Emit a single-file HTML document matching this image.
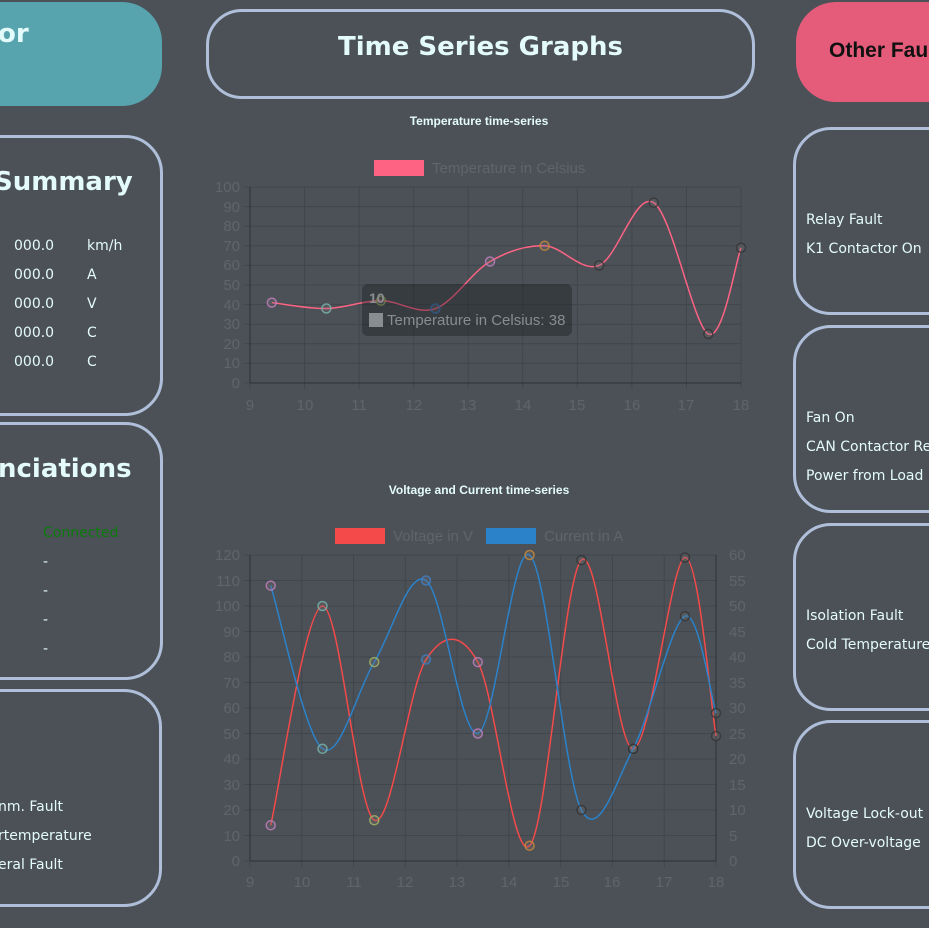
<!DOCTYPE html>
<html><head><meta charset="utf-8">
<style>
body{margin:0;width:929px;height:928px;background:#4b5157;overflow:hidden;position:relative;font-family:"DejaVu Sans",sans-serif;color:#e4fbfb}
.a{position:absolute}
.box{position:absolute;border:3px solid #b0bfd9;border-radius:38px;box-sizing:border-box}
.t{position:absolute;font-size:14px;white-space:nowrap}
.h{position:absolute;font-size:26px;font-weight:bold;white-space:nowrap}
svg{position:absolute;left:0;top:0}
svg text{font-family:"Liberation Sans",sans-serif;font-size:15px;fill:#5f656b}
</style></head><body>
<div class="a" style="left:-60px;top:2px;width:222px;height:104px;background:#57a3ae;border-radius:40px"></div>
<div class="h" style="left:-2px;top:19px">or</div>
<div class="box" style="left:-60px;top:135px;width:223px;height:281px"></div>
<div class="h" style="left:-6px;top:167px">Summary</div>
<div class="t" style="left:14px;top:238px">000.0</div><div class="t" style="left:87px;top:238px">km/h</div>
<div class="t" style="left:14px;top:267px">000.0</div><div class="t" style="left:87px;top:267px">A</div>
<div class="t" style="left:14px;top:296px">000.0</div><div class="t" style="left:87px;top:296px">V</div>
<div class="t" style="left:14px;top:325px">000.0</div><div class="t" style="left:87px;top:325px">C</div>
<div class="t" style="left:14px;top:354px">000.0</div><div class="t" style="left:87px;top:354px">C</div>
<div class="box" style="left:-60px;top:422px;width:223px;height:258px"></div>
<div class="h" style="left:-2px;top:454px">nciations</div>
<div class="t" style="left:43px;top:525px;color:#0a7a0a">Connected</div>
<div class="t" style="left:43px;top:554px">-</div>
<div class="t" style="left:43px;top:583px">-</div>
<div class="t" style="left:43px;top:612px">-</div>
<div class="t" style="left:43px;top:641px">-</div>
<div class="box" style="left:-60px;top:689px;width:222px;height:218px"></div>
<div class="t" style="left:-2px;top:799px">nm. Fault</div>
<div class="t" style="left:-2px;top:828px">rtemperature</div>
<div class="t" style="left:-2px;top:857px">eral Fault</div>

<div class="box" style="left:206px;top:9px;width:549px;height:90px;border-radius:36px"></div>
<div class="h" style="left:206px;width:549px;text-align:center;top:32px">Time Series Graphs</div>

<div class="a" style="left:796px;top:2px;width:200px;height:100px;background:#e55c7a;border-radius:40px"></div>
<div class="a" style="left:829px;top:39px;font:bold 21px 'Liberation Sans',sans-serif;color:#111;white-space:nowrap">Other Faults</div>
<div class="box" style="left:793px;top:127px;width:200px;height:188px"></div>
<div class="t" style="left:806px;top:212px">Relay Fault</div>
<div class="t" style="left:806px;top:241px">K1 Contactor On</div>
<div class="box" style="left:793px;top:325px;width:200px;height:188px"></div>
<div class="t" style="left:806px;top:410px">Fan On</div>
<div class="t" style="left:806px;top:439px">CAN Contactor Request</div>
<div class="t" style="left:806px;top:468px">Power from Load</div>
<div class="box" style="left:793px;top:523px;width:200px;height:188px"></div>
<div class="t" style="left:806px;top:608px">Isolation Fault</div>
<div class="t" style="left:806px;top:637px">Cold Temperature</div>
<div class="box" style="left:793px;top:720px;width:200px;height:189px"></div>
<div class="t" style="left:806px;top:806px">Voltage Lock-out</div>
<div class="t" style="left:806px;top:835px">DC Over-voltage</div>

<svg width="929" height="928" id="s">
<g id="grid" stroke="#41464b" stroke-width="1"></g>
<text x="479" y="125" text-anchor="middle" style="font-weight:bold;font-size:12px;fill:#e4fbfb">Temperature time-series</text>
<rect x="374" y="160" width="50" height="16" fill="#ff6384"/>
<text x="432" y="173">Temperature in Celsius</text>
<g text-anchor="end">
<text x="240" y="388">0</text><text x="240" y="368">10</text><text x="240" y="349">20</text><text x="240" y="329">30</text><text x="240" y="310">40</text><text x="240" y="290">50</text><text x="240" y="270">60</text><text x="240" y="251">70</text><text x="240" y="231">80</text><text x="240" y="212">90</text><text x="240" y="192">100</text>
</g>
<g text-anchor="middle">
<text x="250" y="410">9</text><text x="305" y="410">10</text><text x="359" y="410">11</text><text x="414" y="410">12</text><text x="468" y="410">13</text><text x="523" y="410">14</text><text x="577" y="410">15</text><text x="632" y="410">16</text><text x="686" y="410">17</text><text x="741" y="410">18</text>
</g>
<text x="479" y="494" text-anchor="middle" style="font-weight:bold;font-size:12px;fill:#e4fbfb">Voltage and Current time-series</text>
<rect x="335" y="528" width="50" height="16" fill="#f44a4a"/>
<text x="393" y="541">Voltage in V</text>
<rect x="486" y="528" width="50" height="16" fill="#2c82c9"/>
<text x="544" y="541">Current in A</text>
<g text-anchor="end">
<text x="240" y="866">0</text><text x="240" y="841">10</text><text x="240" y="815">20</text><text x="240" y="790">30</text><text x="240" y="764">40</text><text x="240" y="739">50</text><text x="240" y="713">60</text><text x="240" y="688">70</text><text x="240" y="662">80</text><text x="240" y="637">90</text><text x="240" y="611">100</text><text x="240" y="586">110</text><text x="240" y="560">120</text>
</g>
<g>
<text x="729" y="866">0</text><text x="729" y="841">5</text><text x="729" y="815">10</text><text x="729" y="790">15</text><text x="729" y="764">20</text><text x="729" y="739">25</text><text x="729" y="713">30</text><text x="729" y="688">35</text><text x="729" y="662">40</text><text x="729" y="637">45</text><text x="729" y="611">50</text><text x="729" y="586">55</text><text x="729" y="560">60</text>
</g>
<g text-anchor="middle">
<text x="250" y="887">9</text><text x="302" y="887">10</text><text x="354" y="887">11</text><text x="405" y="887">12</text><text x="457" y="887">13</text><text x="509" y="887">14</text><text x="561" y="887">15</text><text x="612" y="887">16</text><text x="664" y="887">17</text><text x="716" y="887">18</text>
</g>
<g id="lines" fill="none" stroke-width="1.5"></g>
<rect x="362" y="284" width="210" height="52" rx="6" fill="rgba(20,22,25,0.35)"/>
<text x="369" y="303" style="font-weight:bold;font-size:14px;fill:#8a8d90">10</text>
<rect x="369" y="313" width="14" height="14" fill="#8a8d90"/>
<text x="387" y="325" style="fill:#8a8d90">Temperature in Celsius: 38</text>
</svg>
<script>
var NS="http://www.w3.org/2000/svg",g=document.getElementById('grid'),L=document.getElementById('lines');
function el(p,t,a){var e=document.createElementNS(NS,t);for(var k in a)e.setAttribute(k,a[k]);p.appendChild(e);return e}
function grid(x0,x1,y0,y1,nx,ny){for(var i=0;i<=nx;i++){var x=x0+(x1-x0)*i/nx;el(g,'line',{x1:x,x2:x,y1:y1,y2:y0+6})}
for(var j=0;j<=ny;j++){var y=y0-(y0-y1)*j/ny;el(g,'line',{x1:x0-6,x2:x1,y1:y,y2:y})}
el(g,'line',{x1:x0,x2:x0,y1:y1,y2:y0,stroke:'#2d3134'});el(g,'line',{x1:x0,x2:x1,y1:y0,y2:y0,stroke:'#2d3134'})}
grid(250,741,383,187,9,10);grid(250,716,861,555,9,12);
el(g,'line',{x1:716,x2:716,y1:555,y2:861,stroke:'#2d3134'});
var xs=[9.4,10.4,11.4,12.4,13.4,14.4,15.4,16.4,17.4,18];
var pc=['#c47fc0','#79b8b0','#a9b865','#3f7fc9','#c47fc0','#d08a3a','#333','#333','#333','#333'];
function draw(data,mx,my,col){var p=data.map(function(v,i){return[mx(xs[i]),my(v)]});
var d='M'+p[0];for(var i=0;i<p.length-1;i++){var a=p[i-1]||p[i],b=p[i],c=p[i+1],e=p[i+2]||c,t=0.4/2.4;
var c1=[b[0]+(c[0]-a[0])*t,b[1]+(c[1]-a[1])*t],c2=[c[0]-(e[0]-b[0])*t,c[1]-(e[1]-b[1])*t];d+='C'+c1+' '+c2+' '+c}
el(L,'path',{d:d,stroke:col});p.forEach(function(q,i){el(L,'circle',{cx:q[0],cy:q[1],r:4.5,stroke:pc[i],'stroke-width':1.5,fill:'rgba(120,120,120,0.25)','stroke-opacity':0.8})})}
draw([41,38,42,38,62,70,60,92,25,69],function(x){return 250+(x-9)*491/9},function(v){return 383-v*1.96},'#ff6384');
var m2x=function(x){return 250+(x-9)*466/9},m2y=function(v){return 861-v*2.55};
draw([14,100,16,79,78,6,118,44,119,49],m2x,m2y,'#f44a4a');
draw([54,22,39,55,25,60,10,22,48,29].map(function(v){return v*2}),m2x,m2y,'#2c82c9');
</script>
</body></html>
